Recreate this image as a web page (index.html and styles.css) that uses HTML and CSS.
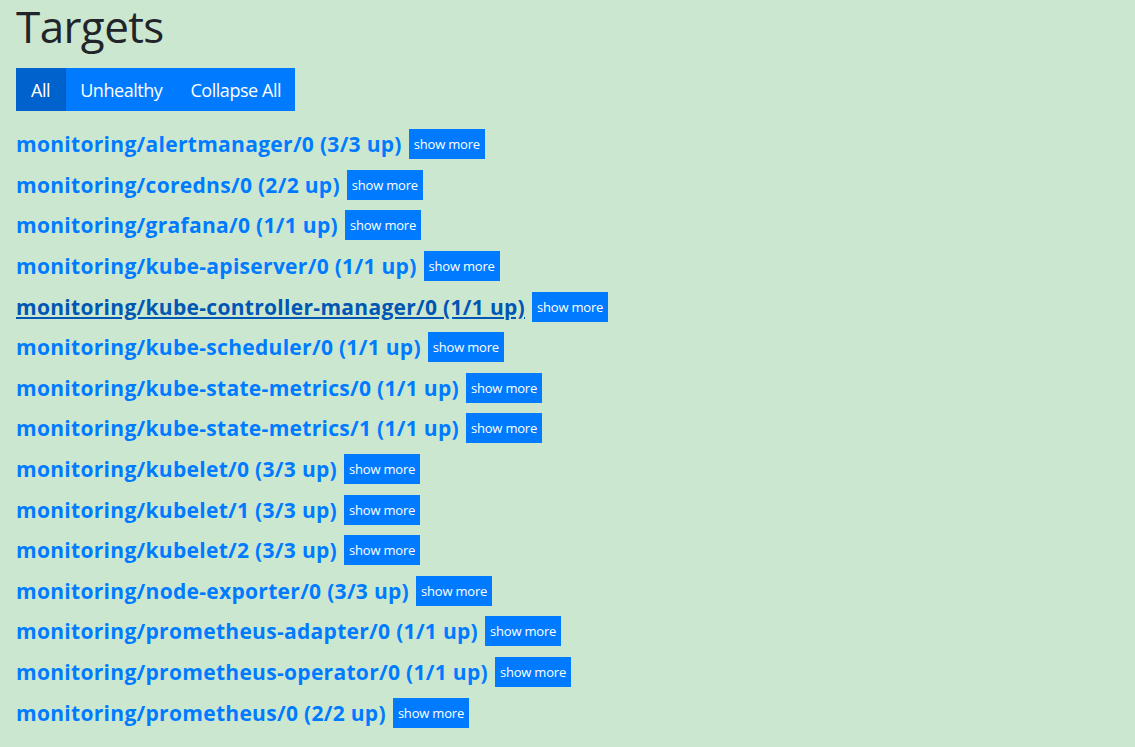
FILE: index.html
```html
<!DOCTYPE html>
<html>
<head>
<meta charset="utf-8">
<link rel="stylesheet" href="styles.css">
</head>
<body>
<div class="page">
  <h1 class="title">Targets</h1>
  <div class="btn-group">
    <button class="btn active">All</button>
    <button class="btn">Unhealthy</button>
    <button class="btn">Collapse All</button>
  </div>
  <div class="targets">
    <div class="row"><a class="job">monitoring/alertmanager/0 (3/3 up)</a><button class="more">show more</button></div>
    <div class="row"><a class="job">monitoring/coredns/0 (2/2 up)</a><button class="more">show more</button></div>
    <div class="row"><a class="job">monitoring/grafana/0 (1/1 up)</a><button class="more">show more</button></div>
    <div class="row"><a class="job">monitoring/kube-apiserver/0 (1/1 up)</a><button class="more">show more</button></div>
    <div class="row"><a class="job hover">monitoring/kube-controller-manager/0 (1/1 up)</a><button class="more">show more</button></div>
    <div class="row"><a class="job">monitoring/kube-scheduler/0 (1/1 up)</a><button class="more">show more</button></div>
    <div class="row"><a class="job">monitoring/kube-state-metrics/0 (1/1 up)</a><button class="more">show more</button></div>
    <div class="row"><a class="job">monitoring/kube-state-metrics/1 (1/1 up)</a><button class="more">show more</button></div>
    <div class="row"><a class="job">monitoring/kubelet/0 (3/3 up)</a><button class="more">show more</button></div>
    <div class="row"><a class="job">monitoring/kubelet/1 (3/3 up)</a><button class="more">show more</button></div>
    <div class="row"><a class="job">monitoring/kubelet/2 (3/3 up)</a><button class="more">show more</button></div>
    <div class="row"><a class="job">monitoring/node-exporter/0 (3/3 up)</a><button class="more">show more</button></div>
    <div class="row"><a class="job">monitoring/prometheus-adapter/0 (1/1 up)</a><button class="more">show more</button></div>
    <div class="row"><a class="job">monitoring/prometheus-operator/0 (1/1 up)</a><button class="more">show more</button></div>
    <div class="row"><a class="job">monitoring/prometheus/0 (2/2 up)</a><button class="more">show more</button></div>
  </div>
</div>
</body>
</html>
```
FILE: styles.css
```css
html, body {
  margin: 0;
  padding: 0;
  background: #cce7cf;
  font-family: "Open Sans", "Noto Sans", sans-serif;
}
.page {
  padding: 0 16px;
}
.title {
  margin: 0;
  font-size: 44px;
  font-weight: 400;
  line-height: 52px;
  color: #212529;
  letter-spacing: -0.6px;
}
.btn-group {
  display: flex;
  margin-top: 16px;
  width: max-content;
}
.btn {
  font-family: inherit;
  font-size: 18px;
  height: 43px;
  border: 0;
  background: #007bff;
  color: #fff;
  padding: 0 14px;
  letter-spacing: -0.45px;
}
.btn.active {
  background: #0062cc;
  border-right: 1px solid #005cbf;
  padding: 0 15px;
}
.targets {
  margin-top: 13px;
  display: flex;
  flex-direction: column;
}
.row {
  display: flex;
  align-items: center;
  height: 40.6px;
  gap: 7px;
}
.job {
  font-size: 21px;
  font-weight: 700;
  color: #007bff;
  letter-spacing: 0.3px;
  text-decoration: none;
}
.job.hover {
  color: #0056b3;
  text-decoration: underline;
}
.more {
  font-family: inherit;
  border: 0;
  background: #007bff;
  color: #fff;
  font-size: 13px;
  height: 30px;
  padding: 0 5px;
  letter-spacing: -0.2px;
}
```
